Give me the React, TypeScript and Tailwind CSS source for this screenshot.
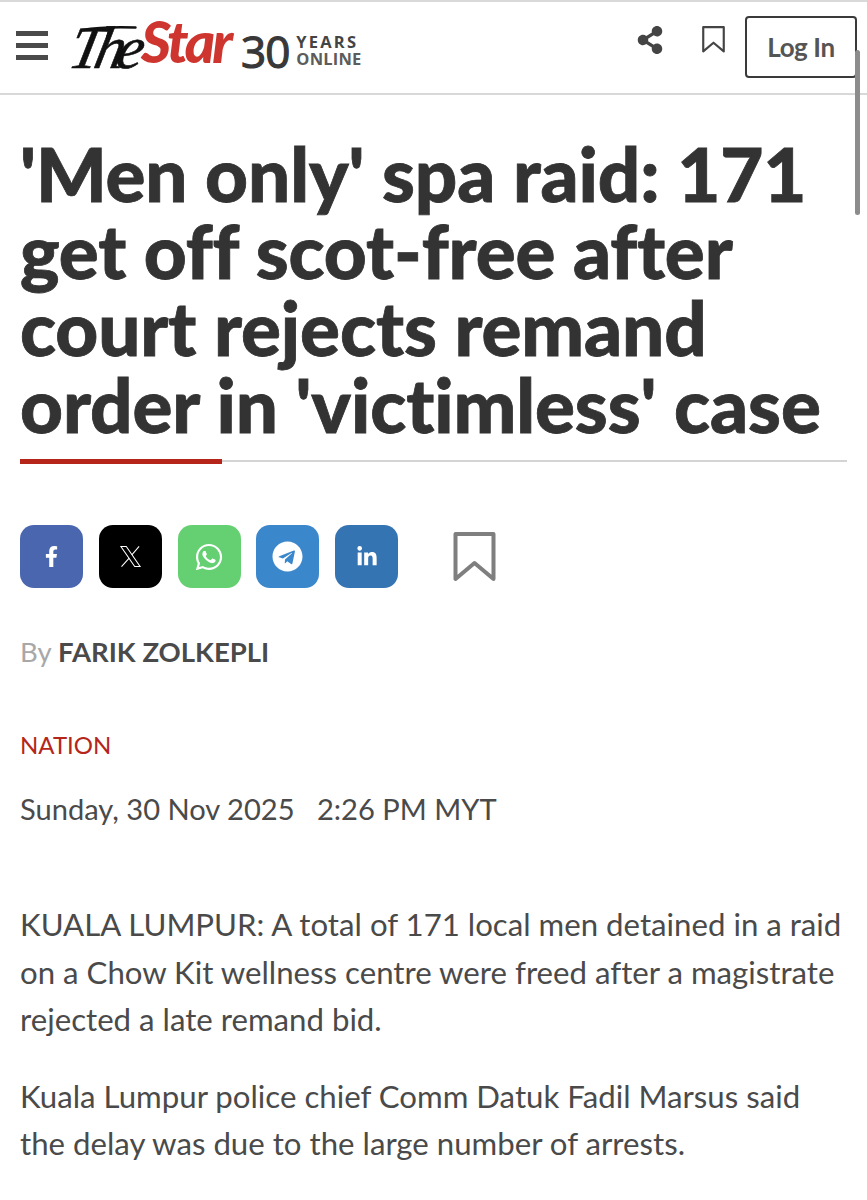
import { FaFacebookF, FaWhatsapp, FaTelegram, FaLinkedinIn, FaShareAlt } from "react-icons/fa";

function Bookmark({ className }: { className: string }) {
  return (
    <svg viewBox="0 0 42 50" className={className} fill="none" stroke="currentColor" strokeWidth="4" strokeLinejoin="round" strokeLinecap="round">
      <path d="M2 2H40V47L21 31L2 47Z" />
    </svg>
  );
}

function XLogo() {
  return (
    <svg viewBox="0 0 24 24" className="w-[23px] h-[23px]" fill="none" stroke="currentColor" strokeWidth="1.1">
      <path d="M2 1.5H7.6L22 22.5H16.4Z" />
      <path d="M21 1.5L13.4 10.3M10.6 13.6L2.6 22.5" />
    </svg>
  );
}

const buttons = [
  { bg: "bg-[#4a66ae]", icon: <FaFacebookF className="w-[21px] h-[21px]" /> },
  { bg: "bg-black", icon: <XLogo /> },
  { bg: "bg-[#65d072]", icon: <FaWhatsapp className="w-[30px] h-[30px]" /> },
  { bg: "bg-[#3a87cb]", icon: <FaTelegram className="w-[31px] h-[31px]" /> },
  { bg: "bg-[#3574b3]", icon: <FaLinkedinIn className="w-[22px] h-[22px]" /> },
];

export default function App() {
  return (
    <div className="relative w-[867px] h-[1200px] overflow-hidden bg-white text-[#333] font-['Lato','Noto_Sans',sans-serif] [font-variant-ligatures:none]">
      <header className="h-[95px] border-t-2 border-b-2 border-t-[#d9d9d9] border-b-[#d8d8d8] flex items-start pl-4 pr-[10px]">
        <div className="flex flex-col gap-[7px] mt-[29px] w-[32px] shrink-0">
          <span className="h-[5px] bg-[#4a4a4a]" />
          <span className="h-[5px] bg-[#4a4a4a]" />
          <span className="h-[5px] bg-[#4a4a4a]" />
        </div>
        <div className="relative ml-[16px] mt-[12px] h-[64px] flex items-start">
          <span className="relative w-[72px] text-[60px] leading-[64px] italic text-[#111] font-['Liberation_Serif',serif] tracking-[-8px] -skew-x-12 origin-bottom mt-[2px] [-webkit-text-stroke:0.6px_#111]">
            The
            <svg viewBox="0 0 70 12" className="absolute left-[4px] top-[9px] w-[62px] h-[10px] skew-x-12" fill="none" stroke="#111" strokeWidth="3" strokeLinecap="round">
              <path d="M2 6C20 3 42 2 66 3" />
            </svg>
          </span>
          <span className="ml-[5px] text-[58px] leading-[64px] font-black italic text-[#cf352f] font-['Lato',sans-serif] tracking-[-3px] -mt-[5px]">Star</span>
          <span className="ml-[11px] mt-[18px] text-[44px] leading-[38px] font-normal text-[#383838] font-['Open_Sans',sans-serif] tracking-[-1px] [-webkit-text-stroke:1.2px_#383838]">30</span>
          <div className="ml-[7px] mt-[19px] flex flex-col font-['Open_Sans',sans-serif] font-bold">
            <span className="text-[16.5px] leading-[17px] tracking-[2.2px] text-[#444]">YEARS</span>
            <span className="text-[16.5px] leading-[17px] tracking-[0.2px] text-[#5c5c5c]">ONLINE</span>
          </div>
        </div>
        <div className="ml-auto flex items-start">
          <FaShareAlt className="mt-[24px] w-[28px] h-[28px] text-[#444]" />
          <Bookmark className="ml-[38px] mt-[24px] w-[23px] h-[27px] text-[#444]" />
          <div className="ml-[20px] mt-[14px] w-[112px] h-[62px] border-2 border-[#3a3a3a] rounded-[4px] flex items-center justify-center text-[26px] font-bold text-[#555] tracking-[-0.4px]">Log In</div>
        </div>
      </header>

      <main className="px-5">
        <h1 className="mt-[40px] text-[74.5px] leading-[77px] font-black text-[#333] whitespace-nowrap tracking-[-0.1px] [-webkit-text-stroke:0.8px_#333]">
          <div>'Men only' spa raid: 171</div>
          <div>get off scot-free after</div>
          <div>court rejects remand</div>
          <div>order in 'victimless' case</div>
        </h1>
        <div className="mt-[17px] w-[827px] h-[2px] bg-[#d4d4d4] relative">
          <div className="absolute left-0 -top-[1px] w-[202px] h-[5px] bg-[#b5251a]" />
        </div>

        <div className="mt-[63px] flex items-center">
          <div className="flex gap-[15.75px]">
            {buttons.map((b, i) => (
              <div key={i} className={`w-[63px] h-[63px] rounded-[14px] flex items-center justify-center text-white ${b.bg}`}>{b.icon}</div>
            ))}
          </div>
          <Bookmark className="ml-[55px] w-[43px] h-[50px] text-[#7f7f7f]" />
        </div>

        <p className="mt-[44px] text-[27.5px] leading-[40px]">
          <span className="text-[#a8a8a8]">By </span>
          <span className="font-bold text-[#4a4a4a]">FARIK ZOLKEPLI</span>
        </p>

        <p className="mt-[53px] text-[24px] leading-[40px] text-[#b5251a]">NATION</p>
        <p className="mt-[24px] text-[29.1px] leading-[40px] text-[#4a4a4a] whitespace-pre">Sunday, 30 Nov 2025   2:26 PM MYT</p>

        <p className="mt-[72px] text-[31.2px] leading-[47.5px] text-[#4a4a4a]">
          KUALA LUMPUR: A total of 171 local men detained in a raid on a Chow Kit wellness centre were freed after a magistrate rejected a late remand bid.
        </p>
        <p className="mt-[29px] text-[31.2px] leading-[47.5px] text-[#4a4a4a]">
          Kuala Lumpur police chief Comm Datuk Fadil Marsus said the delay was due to the large number of arrests.
        </p>
      </main>

      <div className="absolute left-[855px] top-[50px] w-[5px] h-[165px] rounded-full bg-[#8c8c8c]" />
    </div>
  );
}
